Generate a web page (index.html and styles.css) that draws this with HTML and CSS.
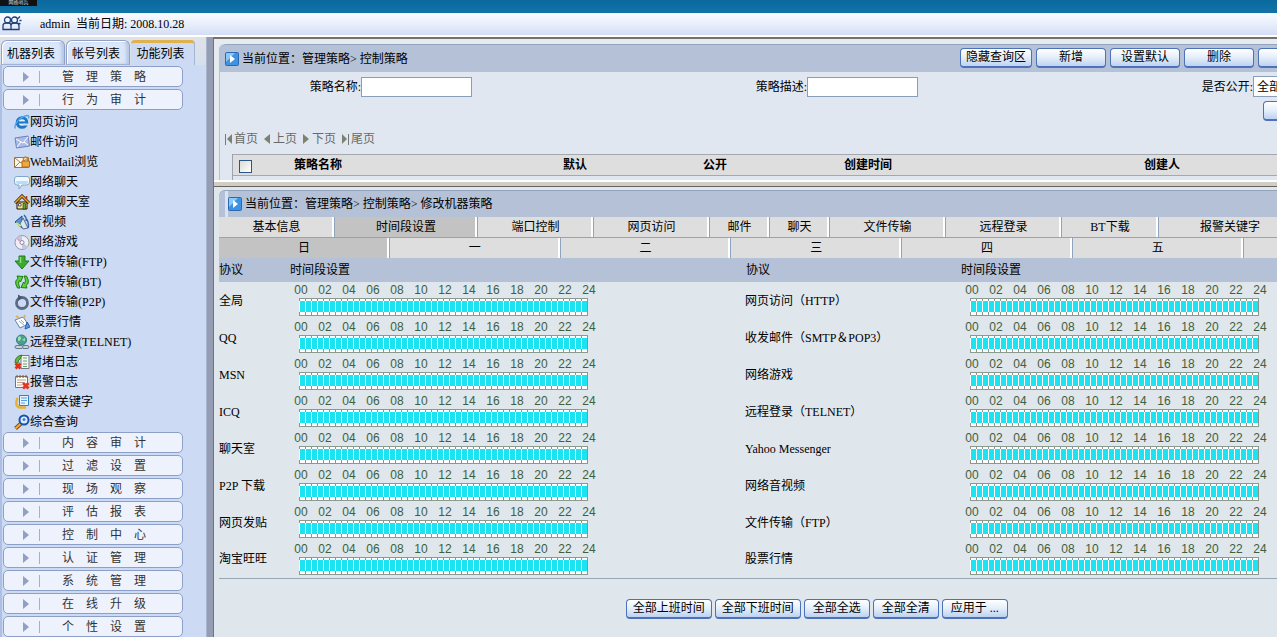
FILE: index.html
```html
<!DOCTYPE html>
<html lang="zh-CN">
<head>
<meta charset="utf-8">
<title>控制策略</title>
<link rel="stylesheet" href="styles.css">
</head>
<body>
<header class="banner"><span class="brand">网络哨兵</span></header>
<div class="userbar">
  <svg class="users" viewBox="0 0 20 15" width="20" height="15" fill="none" stroke="#1c3f78" stroke-width="1.300"><circle cx="5.500" cy="4" r="3"/><circle cx="12.500" cy="4" r="3"/><path d="M1 13.500V10q0-3 3-3h3q2 0 2 3v3.500zM9 10q0-3 3-3h2q3 0 3 3v3.500H9M16 2.500l2-2M17.500 4.500h2M16.500 7l2 1"/></svg>
  <span>admin&nbsp; 当前日期: 2008.10.28</span>
</div>
<div class="main">
  <aside class="side">
    <div class="side-tabs">
      <button class="side-tab">机器列表</button>
      <button class="side-tab">帐号列表</button>
      <button class="side-tab active">功能列表</button>
    </div>
    <nav class="tree">
      <button class="menu"><i class="tri"></i><span>管　理　策　略</span></button>
      <button class="menu"><i class="tri"></i><span>行　为　审　计</span></button>
      <ul class="items">
        <li><a href="#"><svg viewBox="0 0 16 16"><circle cx="8" cy="8.500" r="4.800" fill="#e4f1fd" stroke="#1d78c8" stroke-width="3"/><path d="M4 8.500h9" stroke="#1d78c8" stroke-width="2.200"/><path d="M9.500 10.500h5" stroke="#cfdcf4" stroke-width="2"/><path d="M1.500 14.500C-1 11 6 2.500 13 1.500c2 0 2 1.500 1.500 3" fill="none" stroke="#48a8e8" stroke-width="1.300"/></svg>网页访问</a></li>
        <li><a href="#"><svg viewBox="0 0 16 16"><path d="M1 4l13-2 1.500 10-13 2z" fill="#a9bce8" stroke="#6d80c0"/><path d="M2 5l7 4 5-6M3 13l4-5M14 11l-4-3" fill="none" stroke="#fff"/></svg>邮件访问</a></li>
        <li><a href="#"><svg viewBox="0 0 16 16"><path d="M.5 3.500h14v10H.5z" fill="#fbf6e8" stroke="#9a7440"/><path d="M1 4l6 5 7-5M1 13l5-5M9 9l5 4" fill="none" stroke="#a8865a"/><path d="M9.500 8V4.500q2-3 4 0V8" fill="none" stroke="#b9883a" stroke-width="1.500"/><path d="M8 7h7.500v6H8z" fill="#f3a73b" stroke="#ad6b1c"/></svg>WebMail浏览</a></li>
        <li><a href="#"><svg viewBox="0 0 16 16"><path d="M3 2.500h10q2.500 0 2.500 2.500v3q0 3-3 3H8l-3 4v-4H3Q.5 11 .5 8V5Q.5 2.500 3 2.500z" fill="#eff9ff" stroke="#80a8cc"/><path d="M2 7h12q0 3-2 3H4Q2 10 2 7z" fill="#b7dcf5"/></svg>网络聊天</a></li>
        <li><a href="#"><svg viewBox="0 0 16 16"><path d="M3 8h10v7H3z" fill="#ffe66a" stroke="#111"/><path d="M1 9l7-7 7 7" fill="none" stroke="#111" stroke-width="3"/><path d="M1 9l7-7 7 7" fill="none" stroke="#f2a019" stroke-width="1.700"/><path d="M4.500 9.500h2.500v2.500H4.500z" fill="#fff" stroke="#557"/><path d="M9 9.500h2.500V15H9z" fill="#5cae3c" stroke="#222" stroke-width=".6"/><path d="M12.500 2v3" stroke="#a33" stroke-width="1.500"/></svg>网络聊天室</a></li>
        <li><a href="#"><svg viewBox="0 0 16 16"><path d="M1 8l7-6v12z" fill="#5f91cf" stroke="#28508d"/><path d="M9 4l5 10-5 1-3-5z" fill="#dce6ee" stroke="#4f6c91"/><path d="M10 1q3 3 2 6M12.500 5q3 4 1.500 9" fill="none" stroke="#2f66ad" stroke-width="1.500"/><path d="M2 9l5 3" stroke="#c6e86f" stroke-width="2"/></svg>音视频</a></li>
        <li><a href="#"><svg viewBox="0 0 16 16"><circle cx="8" cy="8.500" r="7" fill="#eeeef6" stroke="#9695af"/><path d="M8 8.500L2 5q3-4 6-3zM8 8.500l6 4q-2 3-6 2.500z" fill="#c5c5dc"/><circle cx="8" cy="8.500" r="2" fill="#fff" stroke="#8a86a5"/><path d="M4 5l2 2" stroke="#e9a0c5" stroke-width="2"/></svg>网络游戏</a></li>
        <li><a href="#"><svg viewBox="0 0 16 16"><path d="M5 2h6v5h4l-7 8-7-8h4z" fill="#3caa2d" stroke="#217a20"/><path d="M6.500 3v6" stroke="#8be072" stroke-width="1.500"/></svg>文件传输(FTP)</a></li>
        <li><a href="#"><svg viewBox="0 0 16 16"><path d="M3.500 14Q-.5 7 4 4.500L3 2l6 .5L6.500 8 5.500 6.500Q3.500 9 6 14zM12.500 2q4 7-.5 9.500l1 2.500-6-.5L9.500 8l1 1.500Q12.500 7 10 2z" fill="#5fd03c" stroke="#1d7b15"/></svg>文件传输(BT)</a></li>
        <li><a href="#"><svg viewBox="0 0 16 16"><circle cx="8" cy="9" r="5.500" fill="none" stroke="#5a6b86" stroke-width="2.800"/><path d="M4 .5v6.500l5-3.500z" fill="#485974"/></svg>文件传输(P2P)</a></li>
        <li><a href="#" class="wide"><svg viewBox="0 0 16 16"><path d="M1 6l8-3 5 7-8 4z" fill="#fff" stroke="#6081b5"/><path d="M5 7l5 4M7 6l3 3" stroke="#90a9cf"/><path d="M2 2l3 2M11 1l-1 3" stroke="#e7b143" stroke-width="2"/><path d="M13 8l3 5-5 2z" fill="#5b9be4" stroke="#275dad"/></svg>股票行情</a></li>
        <li><a href="#"><svg viewBox="0 0 16 16"><circle cx="7.500" cy="6" r="5" fill="#48a18a" stroke="#347b85"/><path d="M4 3q3-2 3 1t-3 3zM8 6l3-2v3z" fill="#a3dfb4"/><path d="M3 11.500h4q2 0 2 1.500t-2 1.500H3q-2 0-2-1.500t2-1.500zM9 11.500h4q2 0 2 1.500t-2 1.500H9" fill="#c8d3df" stroke="#64758d"/></svg>远程登录(TELNET)</a></li>
        <li><a href="#"><svg viewBox="0 0 16 16"><path d="M7 1.500h8v13H7z" fill="#f4f7ef" stroke="#778"/><path d="M9 4h4M9 7h4M9 10h4M9 12.500h4" stroke="#6c9a78"/><path d="M1 9q0-7 7-8L6 5q-2 0-2 4z" fill="#69b548" stroke="#357e26"/><path d="M1.500 9.500l5 5m0-5l-5 5" stroke="#df3018" stroke-width="2.800"/></svg>封堵日志</a></li>
        <li><a href="#"><svg viewBox="0 0 16 16"><path d="M1.500 2.500h12v11h-12z" fill="#fffdf8" stroke="#85705e"/><path d="M3 1v3M6 1v3M9 1v3M12 1v3" stroke="#754"/><path d="M3 6h9M3 8.500h7M3 11h5" stroke="#b9a493"/><path d="M9 9l5.500 5.500m0-5.500L9 14.500" stroke="#e43525" stroke-width="3"/></svg>报警日志</a></li>
        <li><a href="#" class="wide"><svg viewBox="0 0 16 16"><path d="M3.500 4Q0 12 6 13.500h6" fill="none" stroke="#e9b02e" stroke-width="2.500"/><path d="M5.500 1.500h9v10h-9z" fill="#e7f3ff" stroke="#397dc8"/><path d="M7 4h6M7 6.500h6M7 9h4" stroke="#5b9cdb"/></svg>搜索关键字</a></li>
        <li><a href="#"><svg viewBox="0 0 16 16"><path d="M1.500 14.500L7 9.500" stroke="#7b4b13" stroke-width="4"/><path d="M1.500 14.500L7 9.500" stroke="#f1ae3a" stroke-width="2"/><circle cx="10" cy="6" r="4.500" fill="#d9eeff" stroke="#1c4faa" stroke-width="2"/><circle cx="10" cy="5.500" r="1.500" fill="#4380cd"/></svg>综合查询</a></li>
      </ul>
      <button class="menu"><i class="tri"></i><span>内　容　审　计</span></button>
      <button class="menu"><i class="tri"></i><span>过　滤　设　置</span></button>
      <button class="menu"><i class="tri"></i><span>现　场　观　察</span></button>
      <button class="menu"><i class="tri"></i><span>评　估　报　表</span></button>
      <button class="menu"><i class="tri"></i><span>控　制　中　心</span></button>
      <button class="menu"><i class="tri"></i><span>认　证　管　理</span></button>
      <button class="menu"><i class="tri"></i><span>系　统　管　理</span></button>
      <button class="menu"><i class="tri"></i><span>在　线　升　级</span></button>
      <button class="menu"><i class="tri"></i><span>个　性　设　置</span></button>
    </nav>
  </aside>
  <div class="splitter"></div>
  <main class="content">
    <section class="frame upper">
      <div class="panel">
        <div class="titlebar">
          <svg class="go" viewBox="0 0 14 14"><rect x=".5" y=".5" width="13" height="13" rx="1" fill="#3c93e2" stroke="#2a67b5"/><path d="M1 1h9L1 10z" fill="#8bc8f5"/><path d="M5 3v8l5-4z" fill="#fff"/></svg>
          <span>当前位置：管理策略&gt; 控制策略</span>
          <div class="actions">
            <button class="btn">隐藏查询区</button>
            <button class="btn">新增</button>
            <button class="btn">设置默认</button>
            <button class="btn">删除</button>
            <button class="btn">导入</button>
          </div>
        </div>
        <form class="query">
          <div class="field"><label for="pname">策略名称:</label><input id="pname" type="text"></div>
          <div class="field"><label for="pdesc">策略描述:</label><input id="pdesc" type="text"></div>
          <div class="field"><label for="popen">是否公开:</label><select id="popen"><option>全部</option></select></div>
          <div class="submit"><button type="button" class="btn">查询</button></div>
        </form>
        <nav class="pager">
          <a href="#"><svg viewBox="0 0 9 12" width="9" height="12"><path d="M1.500 1v11" stroke="#777"/><path d="M8 1v10L3 6z" fill="#7c8270"/></svg>首页</a>
          <a href="#"><svg viewBox="0 0 9 12" width="9" height="12"><path d="M7 1v10L1 6z" fill="#7c8270"/></svg>上页</a>
          <a href="#"><svg viewBox="0 0 9 12" width="9" height="12"><path d="M1 1v10l6-5z" fill="#7c8270"/></svg>下页</a>
          <a href="#"><svg viewBox="0 0 9 12" width="9" height="12"><path d="M1 1v10l5-5z" fill="#7c8270"/><path d="M7.500 1v11" stroke="#777"/></svg>尾页</a>
        </nav>
        <div class="list">
          <table class="policies">
            <thead><tr>
              <th class="c-check"><input type="checkbox" aria-label="全选"></th>
              <th class="c-name">策略名称</th>
              <th class="c-flag">默认</th>
              <th class="c-flag">公开</th>
              <th class="c-time">创建时间</th>
              <th class="c-user">创建人</th>
            </tr></thead>
          </table>
        </div>
      </div>
    </section>
    <div class="divider"></div>
    <section class="frame lower">
      <div class="panel">
        <div class="titlebar marked">
          <svg class="go" viewBox="0 0 14 14"><rect x=".5" y=".5" width="13" height="13" rx="1" fill="#3c93e2" stroke="#2a67b5"/><path d="M1 1h9L1 10z" fill="#8bc8f5"/><path d="M5 3v8l5-4z" fill="#fff"/></svg>
          <span>当前位置：管理策略&gt; 控制策略&gt; 修改机器策略</span>
        </div>
        <div class="tabs">
          <button class="tab t-mid">基本信息</button><button class="tab t-long active">时间段设置</button><button class="tab t-mid">端口控制</button><button class="tab t-mid">网页访问</button><button class="tab t-short">邮件</button><button class="tab t-short">聊天</button><button class="tab t-mid">文件传输</button><button class="tab t-mid">远程登录</button><button class="tab t-bt">BT下载</button><button class="tab t-long">报警关键字</button>
        </div>
        <div class="days">
          <button class="tab active">日</button><button class="tab">一</button><button class="tab">二</button><button class="tab">三</button><button class="tab">四</button><button class="tab">五</button><button class="tab">六</button>
        </div>
        <table class="schedule">
          <colgroup><col class="s-name"><col class="s-time"><col class="s-name2"><col></colgroup>
          <thead><tr><th>协议</th><th>时间段设置</th><th>协议</th><th>时间段设置</th></tr></thead>
          <tbody id="rows"></tbody>
        </table>
        <div class="footer">
          <button class="btn big">全部上班时间</button>
          <button class="btn big">全部下班时间</button>
          <button class="btn mid">全部全选</button>
          <button class="btn mid">全部全清</button>
          <button class="btn mid">应用于 ...</button>
        </div>
      </div>
    </section>
  </main>
</div>
<script src="schedule.js"></script>
</body>
</html>
```
FILE: styles.css
```css
* { box-sizing: border-box; }
body {
  margin: 0;
  height: 100vh;
  overflow: hidden;
  display: flex;
  flex-direction: column;
  font: 12px/14px "Liberation Serif", "Noto Sans CJK SC", serif;
  color: #000;
  background: #dfe6ec;
}
button, input, select { font: inherit; color: inherit; margin: 0; padding: 0; border-radius: 0; }
button { white-space: nowrap; overflow: hidden; }
a { color: inherit; text-decoration: none; }

.banner { flex: none; height: 13px; background: linear-gradient(#0a6a9f, #1173a8); }
.brand {
  display: block;
  width: 37px;
  height: 6px;
  overflow: hidden;
  background: #111;
  color: #ddd;
  font-size: 5px;
  line-height: 6px;
  text-align: center;
}
.userbar {
  flex: none;
  display: flex;
  align-items: center;
  gap: 18px;
  height: 22px;
  padding: 0 0 2px 2px;
  background: linear-gradient(#fafcff, #eaf0fc 45%, #d4def4);
}
.userbar span { padding-top: 2px; }
.users { flex: none; }
.main { flex: 1; display: flex; min-height: 0; border-top: 2px solid #fff; }

.side { flex: none; width: 206px; display: flex; flex-direction: column; background: #cddaf3; overflow: hidden; }
.side-tabs { flex: none; display: flex; gap: 1px; height: 28px; padding: 3px 0 0 1px; background: linear-gradient(#dfe3e7, #d6dfee); }
.side-tab {
  width: 64px;
  height: 25px;
  padding: 2px 4px 0 0;
  border: 1px solid #8fa1c8;
  border-bottom-color: #a5b4d4;
  border-radius: 6px 6px 0 0;
  background: #dbe6f8;
  box-shadow: inset 1px 1px 0 #fff, inset -3px 0 3px #b8c9e8;
}
.side-tab.active {
  padding-top: 0;
  border: 0;
  border-top: 3px solid #deb34e;
  border-right: 1px solid #a5b4d4;
  border-radius: 4px 4px 0 0;
  background: #cddaf3;
  box-shadow: none;
}
.tree { flex: 1; display: flex; flex-direction: column; gap: 2px; padding: 1px 0 0 1px; border-left: 2px solid #adc0e4; }
.menu {
  flex: none;
  display: flex;
  align-items: center;
  width: 180px;
  height: 21px;
  padding-left: 19px;
  border: 1px solid #8c9fc8;
  border-radius: 5px;
  background: #edf2fd;
  color: #333;
}
.tri {
  flex: none;
  width: 17px;
  height: 12px;
  margin-right: 22px;
  background: linear-gradient(#a3b0cd, #a3b0cd) right / 1px 12px no-repeat;
}
.tri::before {
  content: "";
  display: block;
  width: 0;
  height: 0;
  margin-top: 1px;
  border: 5px solid transparent;
  border-left: 6px solid #909fc2;
  border-right: 0;
}
.items { flex: none; list-style: none; margin: 0 0 -2px; padding: 0 0 0 11px; }
.items a { display: flex; align-items: center; height: 20px; }
.items a.wide { gap: 3px; }
.items svg { flex: none; width: 16px; height: 16px; }

.splitter { flex: none; width: 8px; background: #949db4; border-left: 1px solid #aab4cb; border-right: 1px solid #77736c; }
.content { flex: 1; display: flex; flex-direction: column; min-width: 0; }
.frame { overflow: hidden; padding-left: 5px; }
.upper { flex: none; height: 143px; padding-top: 5px; border-top: 2px solid #77736c; background: #e6ebf0; }
.lower { flex: 1; padding-top: 3px; background: #dfe6ec; }
.divider { flex: none; height: 7px; background: #d0cdc4; border-top: 2px solid #fff; border-bottom: 1px solid #66645f; }

.upper .panel { width: 105%; height: 100%; border-left: 1px solid #a9c3e4; background: #e1e7f1; border-radius: 5px 0 0 0; }
.titlebar {
  display: flex;
  align-items: center;
  gap: 3px;
  height: 27px;
  padding-left: 5px;
  border-top: 1px solid #93a5be;
  border-radius: 6px 0 0 0;
  background: #b5c1d7;
}
.upper .titlebar { height: 28px; }
.titlebar.marked { padding-left: 9px; background: linear-gradient(#dbe4ee, #dbe4ee) 6px 0 / 3px 100% no-repeat #b5c1d7; }
.go { flex: none; width: 14px; height: 14px; }
.actions { display: flex; gap: 4px; margin: 0 2px 2px auto; }
.btn {
  flex: none;
  width: 70px;
  height: 20px;
  border: 1px solid #4d72b8;
  border-bottom-width: 2px;
  border-radius: 4px;
  background: linear-gradient(#fff, #e4eefa 50%, #bdd2f1);
}
.actions .btn:first-child { width: 72px; }
.footer .btn.big { width: 86px; }
.footer .btn.mid { width: 66px; }

.query { display: grid; grid-template-columns: repeat(3, 446px); padding-top: 4px; }
.field { display: flex; align-items: center; height: 21px; }
.field label { width: 141px; text-align: right; }
.field input { width: 111px; height: 20px; border: 1px solid #8a9eb8; background: #fff; }
.field select { width: 111px; height: 21px; border: 1px solid #8a9eb8; background: #fff; appearance: none; padding-left: 3px; }
.submit { grid-column: 3; padding: 4px 0 0 151px; height: 27px; }
.pager { display: flex; gap: 5px; height: 30px; align-items: center; padding-left: 4px; color: #696969; }
.pager a { display: flex; align-items: center; gap: 1px; }
.list { height: 26px; margin-left: 12px; border-left: 1px solid #9aa4ae; }
.policies { width: 100%; min-width: 1140px; table-layout: fixed; border-collapse: collapse; background: #dedede; }
.policies th { height: 21px; padding: 0; border-top: 1px solid #a3a9ae; border-bottom: 1px solid #a3a9ae; }
.policies input { display: block; appearance: none; width: 13px; height: 13px; margin: 2px auto 0; border: 1px solid #2c5687; background: linear-gradient(135deg, #dcdcd6, #fff); }
.c-check { width: 25px; }
.policies .c-name { width: 247px; padding-left: 36px; text-align: left; }
.c-flag { width: 140px; }
.c-time { width: 166px; }

.lower .panel { width: 113%; }
.tabs, .days { display: flex; border-bottom: 1px solid #92a4ba; overflow: hidden; }
.days { display: grid; grid-template-columns: repeat(7, 1fr); border-bottom: 0; }
.tab { flex: none; height: 20px; border: 0; border-right: 1px solid #8fa4bf; background: #dedede; box-shadow: inset -2px 0 0 #fff; }
.tab.active { background: #c3c3c3; }
.t-mid { width: 116px; }
.t-long { width: 143px; }
.t-short { width: 60px; }
.t-bt { width: 97px; }

.schedule { width: 100%; table-layout: fixed; border-collapse: collapse; border-bottom: 1px solid #94a8b6; }
.s-name { width: 70px; }
.s-time { width: 456px; }
.s-name2 { width: 215px; }
.schedule th { height: 24px; padding: 0 0 0 1px; background: #b5c1d7; font-weight: normal; text-align: left; }
.schedule th:first-child { padding: 0; }
.schedule td { height: 37px; padding: 0; vertical-align: middle; }
.ruler { display: flex; color: #3d603d; font: 12px/14px "Liberation Sans", sans-serif; }
.ruler span { flex: none; width: 24px; text-align: center; }
.slots {
  display: grid;
  grid-template-columns: repeat(48, 6px);
  width: 289px;
  height: 18px;
  margin: 1px 0 2px 10px;
  border: 1px solid #8a9a8e;
  border-width: 1px 0;
  background: repeating-linear-gradient(to right, #89958d 0 1px, #fff 1px 6px);
}
.slots i { margin: 2px 0 3px; border-left: 1px solid #fff; background: #1be3f2; }
.footer { display: flex; justify-content: center; gap: 3px; padding-top: 20px; }
```
FILE: schedule.js
```js
const protocols = [
  ["全局", "网页访问（HTTP）"],
  ["QQ", "收发邮件（SMTP＆POP3）"],
  ["MSN", "网络游戏"],
  ["ICQ", "远程登录（TELNET）"],
  ["聊天室", "Yahoo Messenger"],
  ["P2P 下载", "网络音视频"],
  ["网页发贴", "文件传输（FTP）"],
  ["淘宝旺旺", "股票行情"]
];

// Hour labels above 48 half-hour slots.
function scale() {
  let hours = "";
  for (let h = 0; h <= 24; h += 2) {
    hours += "<span>" + String(h).padStart(2, "0") + "</span>";
  }
  return '<div class="ruler">' + hours + '</div><div class="slots">' + "<i></i>".repeat(48) + "</div>";
}

document.getElementById("rows").innerHTML = protocols
  .map(pair => "<tr>" + pair.map(name => "<td>" + name + "</td><td>" + scale() + "</td>").join("") + "</tr>")
  .join("");
```
